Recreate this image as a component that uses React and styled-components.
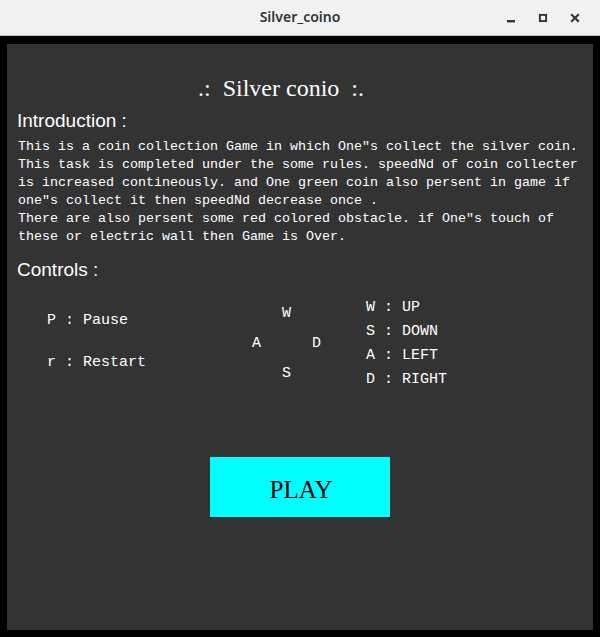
import React from "react";
import styled, { createGlobalStyle } from "styled-components";

const GlobalStyle = createGlobalStyle`
  html, body {
    margin: 0;
    padding: 0;
    background: #000;
  }
  #root {
    width: 600px;
    height: 637px;
  }
`;

const Window = styled.div`
  width: 600px;
  height: 637px;
  display: flex;
  flex-direction: column;
  background: #000;
`;

const TitleBar = styled.header`
  height: 35px;
  flex: none;
  display: grid;
  grid-template-columns: 1fr auto 1fr;
  align-items: center;
  background: #f2f2f2;
  border-bottom: 1px solid #bcbcbc;
  color: #2e3436;
`;

const WindowTitle = styled.div`
  grid-column: 2;
  font-family: "Noto Sans", "DejaVu Sans", sans-serif;
  font-weight: 600;
  font-size: 14px;
  line-height: 18px;
  padding-bottom: 1px;
`;

const WindowButtons = styled.div`
  grid-column: 3;
  justify-self: end;
  display: flex;
  align-items: center;
  padding-right: 9px;
`;

const WindowButton = styled.div`
  width: 32px;
  height: 35px;
  display: flex;
  align-items: center;
  justify-content: center;
`;

const Frame = styled.main`
  flex: 1;
  padding: 8px 7px 7px 7px;
  display: flex;
`;

const Panel = styled.section`
  flex: 1;
  background: #333333;
  padding: 29px 10px 0 10px;
  color: #ffffff;
`;

const GameTitle = styled.h1`
  margin: 0 0 0 181px;
  font-family: "Liberation Serif", "Times New Roman", serif;
  font-weight: 400;
  font-size: 24px;
  line-height: 30px;
  white-space: pre;
`;

const Heading = styled.h2`
  margin: ${(p) => p.$top}px 0 0 0;
  font-family: "Liberation Sans", Arial, sans-serif;
  font-weight: 400;
  font-size: 19px;
  line-height: 24px;
`;

const Body = styled.div`
  margin: 5px 0 0 1px;
  font-family: "Liberation Mono", "Courier New", monospace;
  font-size: 13.333px;
  line-height: 18px;
  white-space: pre;
`;

const ControlsRow = styled.div`
  margin-top: 14px;
  padding-left: 30px;
  display: grid;
  grid-template-columns: 205px 114px auto;
  align-items: start;
  font-family: "Liberation Mono", "Courier New", monospace;
  font-size: 15px;
  white-space: pre;
`;

const KeyList = styled.div`
  margin-top: ${(p) => p.$top}px;
  line-height: ${(p) => p.$line}px;
`;

const Cross = styled.div`
  margin-top: 3px;
  display: grid;
  grid-template-columns: repeat(3, 30px);
  grid-template-rows: repeat(3, 30px);
  line-height: 30px;
`;

const CrossKey = styled.span`
  grid-column: ${(p) => p.$col};
  grid-row: ${(p) => p.$row};
`;

const PlayButton = styled.button`
  display: block;
  margin: 65px auto 0;
  width: 180px;
  height: 60px;
  border: 0;
  padding: 5px 0 0 2px;
  background: #00ffff;
  color: #000;
  font-family: "Liberation Serif", "Times New Roman", serif;
  font-size: 25px;
  cursor: pointer;
`;

const intro = [
  "This is a coin collection Game in which One\u2033s collect the silver coin.",
  "This task is completed under the some rules. speedNd of coin collecter",
  "is increased contineously. and One green coin also persent in game if",
  "one\u2033s collect it then speedNd decrease once .",
  "There are also persent some red colored obstacle. if One\u2033s touch of",
  "these or electric wall then Game is Over.",
];

export default function App() {
  return (
    <>
      <GlobalStyle />
      <Window>
        <TitleBar>
          <WindowTitle>Silver_coino</WindowTitle>
          <WindowButtons>
            <WindowButton>
              <svg width="10" height="10" viewBox="0 0 10 10">
                <rect x="1" y="7" width="8" height="2.4" fill="#2e3436" />
              </svg>
            </WindowButton>
            <WindowButton>
              <svg width="10" height="10" viewBox="0 0 10 10">
                <rect x="1.9" y="1.9" width="6.2" height="6.2" fill="none" stroke="#2e3436" strokeWidth="1.9" />
              </svg>
            </WindowButton>
            <WindowButton>
              <svg width="10" height="10" viewBox="0 0 10 10">
                <path d="M1.2 1.2 L8.8 8.8 M8.8 1.2 L1.2 8.8" stroke="#2e3436" strokeWidth="2" />
              </svg>
            </WindowButton>
          </WindowButtons>
        </TitleBar>
        <Frame>
          <Panel>
            <GameTitle>{".:  Silver conio  :."}</GameTitle>
            <Heading $top={6}>Introduction :</Heading>
            <Body>
              {intro.map((line) => (
                <div key={line}>{line}</div>
              ))}
            </Body>
            <Heading $top={12}>Controls :</Heading>
            <ControlsRow>
              <KeyList $top={4} $line={42}>
                <div>P : Pause</div>
                <div>r : Restart</div>
              </KeyList>
              <Cross>
                <CrossKey $col={2} $row={1}>W</CrossKey>
                <CrossKey $col={1} $row={2}>A</CrossKey>
                <CrossKey $col={3} $row={2}>D</CrossKey>
                <CrossKey $col={2} $row={3}>S</CrossKey>
              </Cross>
              <KeyList $top={0} $line={24}>
                <div>W : UP</div>
                <div>S : DOWN</div>
                <div>A : LEFT</div>
                <div>D : RIGHT</div>
              </KeyList>
            </ControlsRow>
            <PlayButton>PLAY</PlayButton>
          </Panel>
        </Frame>
      </Window>
    </>
  );
}
